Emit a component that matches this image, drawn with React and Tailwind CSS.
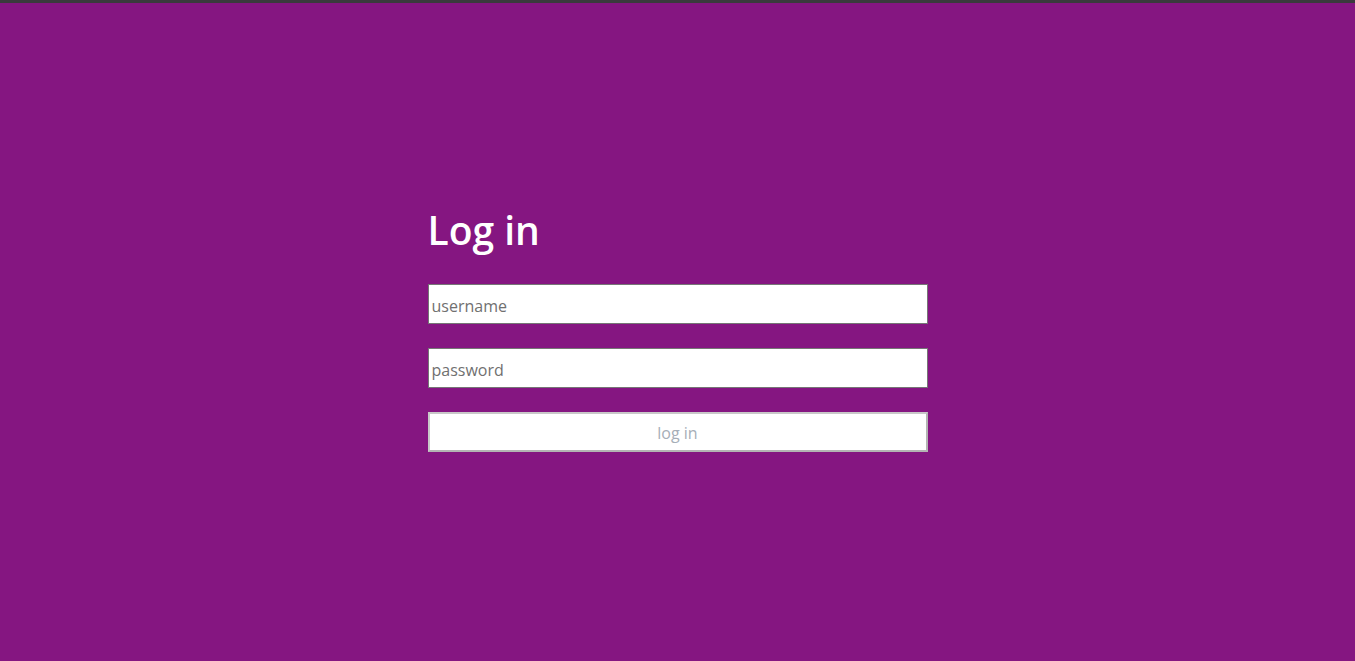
export default function App() {
  return (
    <div className="min-h-screen flex flex-col bg-[#851681]" style={{ fontFamily: '"Open Sans", "Noto Sans", sans-serif' }}>
      <div className="h-[3px] bg-[#3a3a3c]" />
      <main className="flex justify-center pt-[203px]">
        <form className="w-[500px] flex flex-col" onSubmit={(e) => e.preventDefault()}>
          <h1 className="text-[39px] leading-[48px] font-semibold text-white mb-[30px]">Log in</h1>
          <input
            type="text"
            placeholder="username"
            className="h-10 mb-6 bg-white border border-[#767676] px-[3px] pt-[3px] text-[16px] text-[#333] placeholder:text-[#707070] outline-none"
          />
          <input
            type="password"
            placeholder="password"
            className="h-10 mb-6 bg-white border border-[#767676] px-[3px] pt-[3px] text-[16px] text-[#333] placeholder:text-[#707070] outline-none"
          />
          <button
            type="submit"
            className="h-10 pt-[2px] bg-white border-2 border-[#c8c8c8] border-b-[#b4b4b4] border-r-[#b4b4b4] text-[16px] text-[#a6aeb8]"
          >
            log in
          </button>
        </form>
      </main>
    </div>
  )
}
